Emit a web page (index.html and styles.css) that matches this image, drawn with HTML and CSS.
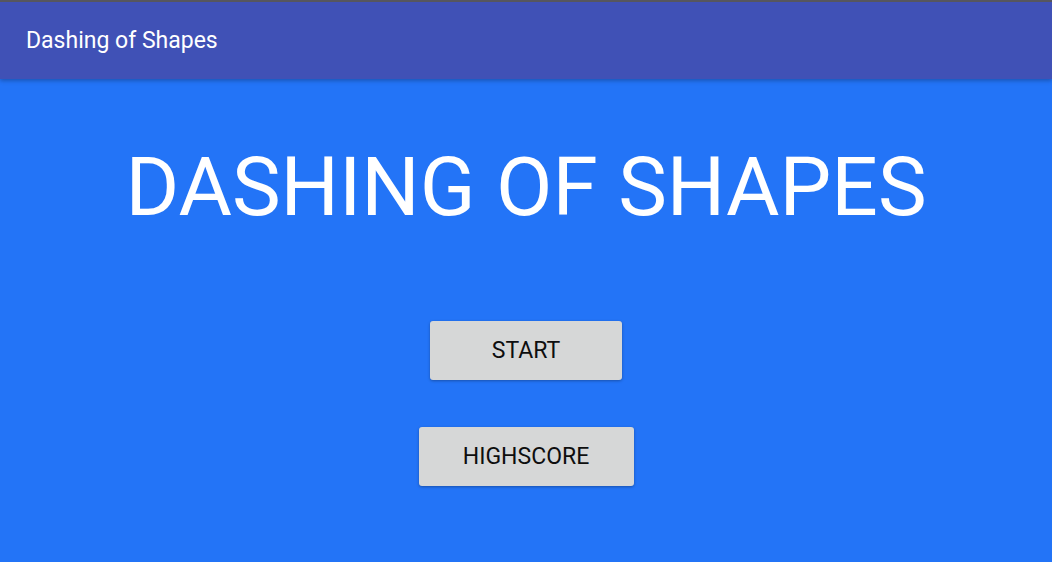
FILE: index.html
```html
<!DOCTYPE html>
<html lang="en">
<head>
    <meta charset="UTF-8">
    <meta name="viewport" content="width=device-width, initial-scale=1.0">
    <title>Dashing of Shapes</title>
    <link rel="stylesheet" href="styles.css">
</head>
<body>
    <header class="toolbar">
        <span class="toolbar-title">Dashing of Shapes</span>
    </header>

    <main class="menu">
        <h1 class="game-title">DASHING OF SHAPES</h1>

        <div class="menu-buttons">
            <button id="start" class="menu-btn">START</button>
            <button id="highscore" class="menu-btn wide">HIGHSCORE</button>
        </div>
    </main>
</body>
</html>
```

FILE: styles.css
```css
html, body {
    height: 100%;
}
body {
    margin: 0;
    font-family: Roboto, "Noto Sans", Arial, sans-serif;
    background-color: #2374f7;
    overflow: hidden;
}
.toolbar {
    position: relative;
    z-index: 1;
    height: 77px;
    border-top: 2px solid #56565e;
    background-color: #4051b6;
    display: flex;
    align-items: center;
    padding: 0 26px;
    box-shadow: 0 2px 4px rgba(0, 0, 0, 0.25);
}
.toolbar-title {
    color: #fff;
    font-size: 23px;
}
.menu {
    display: flex;
    flex-direction: column;
    align-items: center;
}
.game-title {
    margin: 62px 0 0;
    color: #fff;
    font-weight: 400;
    font-size: 82px;
    line-height: 92px;
}
.menu-buttons {
    margin-top: 88px;
    display: flex;
    flex-direction: column;
    align-items: center;
    gap: 47px;
}
.menu-btn {
    width: 192px;
    height: 59px;
    border: none;
    border-radius: 3px;
    background-color: #d6d7d7;
    color: #0e0e0e;
    font-family: inherit;
    font-size: 23px;
    cursor: pointer;
    box-shadow: 0 1px 3px rgba(0, 0, 0, 0.3);
}
.menu-btn.wide {
    width: 215px;
}
```
